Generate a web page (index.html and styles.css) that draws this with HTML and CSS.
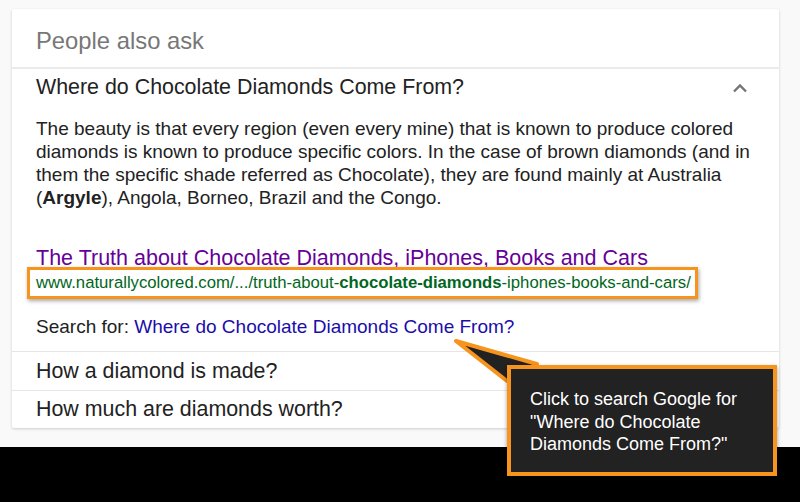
FILE: index.html
```html
<!DOCTYPE html>
<html>
<head>
<meta charset="utf-8">
<link rel="stylesheet" href="styles.css">
</head>
<body>
<div class="stage">
  <div class="card">
    <div class="head">People also ask</div>
    <div class="q open">
      <span>Where do Chocolate Diamonds Come From?</span>
      <svg class="chev" width="16" height="10" viewBox="0 0 16 10"><path d="M2 8.5 L8 2.5 L14 8.5" fill="none" stroke="#757575" stroke-width="2.4"/></svg>
    </div>
    <div class="answer">
      <p class="para">The beauty is that every region (even every mine) that is known to produce colored diamonds is known to produce specific colors. In the case of brown diamonds (and in them the specific shade referred as Chocolate), they are found mainly at Australia (<b>Argyle</b>), Angola, Borneo, Brazil and the Congo.</p>
      <div class="title">The Truth about Chocolate Diamonds, iPhones, Books and Cars</div>
      <div class="url"><span class="urlbox">www.naturallycolored.com/.../truth-about-<b>chocolate-diamonds</b>-iphones-books-and-cars/</span></div>
      <div class="search">Search for: <span class="slink">Where do Chocolate Diamonds Come From?</span></div>
    </div>
    <div class="q">How a diamond is made?</div>
    <div class="q last">How much are diamonds worth?</div>
  </div>
  <div class="band"></div>
  <svg class="pointer" width="120" height="60" viewBox="0 0 120 60">
    <polygon points="3,2 84,25 54,42" fill="#222" stroke="#f7941d" stroke-width="4" stroke-linejoin="round"/>
  </svg>
  <div class="tip">Click to search Google for "Where do Chocolate Diamonds Come From?"</div>
</div>
</body>
</html>
```
FILE: styles.css
```css
html, body {
  margin: 0;
  padding: 0;
}
body {
  background: #f9f9f9;
  font-family: "Liberation Sans", Arial, Helvetica, sans-serif;
  width: 800px;
  height: 502px;
  overflow: hidden;
}
.stage {
  position: relative;
  width: 800px;
  height: 502px;
  padding-top: 9px;
  box-sizing: border-box;
}
.card {
  margin-left: 12px;
  width: 767px;
  background: #fff;
  border-radius: 2px;
  box-shadow: 0 1px 3px rgba(0,0,0,0.18);
}
.head {
  height: 60px;
  box-sizing: border-box;
  padding: 18px 0 0 24px;
  font-size: 23.8px;
  color: #777;
  border-bottom: 2px solid #ebebeb;
}
.q {
  height: 39px;
  box-sizing: border-box;
  display: flex;
  align-items: center;
  justify-content: space-between;
  padding: 0 31px 0 24px;
  font-size: 21.4px;
  color: #222;
  border-top: 1px solid #e6e6e6;
}
.q.open {
  border-top: none;
  height: 37px;
}
.q.last {
  height: 38px;
}
.answer {
  padding: 11px 20px 13px 24px;
}
.para {
  margin: 0;
  font-size: 19px;
  line-height: 23px;
  color: #222;
}
.para b {
  font-weight: bold;
}
.title {
  margin-top: 37px;
  font-size: 21.5px;
  line-height: 25px;
  color: #660099;
}
.url {
  margin-top: -4px;
  font-size: 16.7px;
  line-height: 20px;
  color: #006621;
}
.urlbox {
  display: inline-block;
  margin-left: -9px;
  padding: 3px 4px 3px 6px;
  border: 3px solid #f7941d;
  box-shadow: 1px 2px 4px rgba(0,0,0,0.35);
}
.search {
  margin-top: 17px;
  font-size: 19px;
  line-height: 22px;
  color: #222;
}
.slink {
  color: #1a0dab;
}
.band {
  position: absolute;
  left: 0;
  top: 447px;
  width: 800px;
  height: 55px;
  background: #000;
}
.pointer {
  position: absolute;
  left: 453px;
  top: 339px;
  z-index: 2;
}
.tip {
  position: absolute;
  left: 507px;
  top: 365px;
  width: 270px;
  height: 111px;
  box-sizing: border-box;
  border: 4px solid #f7941d;
  background: #222;
  color: #fff;
  font-size: 18px;
  line-height: 22.5px;
  padding: 19px 20px 0 19px;
  z-index: 3;
  box-shadow: 0 2px 4px rgba(0,0,0,0.4);
}
```
